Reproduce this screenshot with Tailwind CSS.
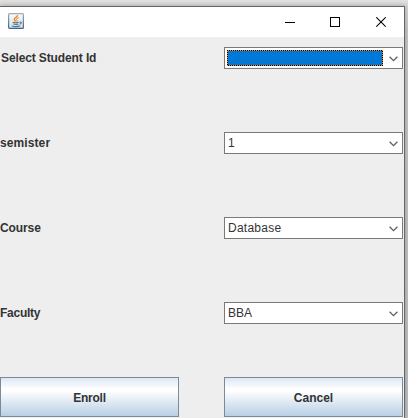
<!DOCTYPE html>
<html lang="en">
<head>
<meta charset="utf-8">
<title>Enroll</title>
<script src="https://cdn.jsdelivr.net/npm/@tailwindcss/browser@4"></script>
</head>
<body class="h-[418px] w-[408px] overflow-hidden bg-[linear-gradient(to_bottom,#e2e2e2,#d6d6d6_6px,#c8c8c8_30px,#c0c0c0)] pt-[6px] font-['Liberation_Sans',Arial,sans-serif] text-[12px] leading-[14px] text-[#333333]">
<div class="flex h-[412px] w-[405px] flex-col border-t border-r border-[#666666] bg-[#eeeeee] shadow-[0_0_5px_rgba(0,0,0,0.25)]">
  <header class="flex h-[30px] shrink-0 items-center bg-white pl-2">
    <svg class="-mt-[2px] size-4" viewBox="0 0 16 16" fill="none">
      <defs>
        <linearGradient id="tile" x1="0" y1="0" x2="0" y2="1"><stop stop-color="#fafafa"/><stop offset="1" stop-color="#d4dde4"/></linearGradient>
        <linearGradient id="edge" x1="0" y1="0" x2="0" y2="1"><stop stop-color="#9cadbb"/><stop offset="1" stop-color="#416684"/></linearGradient>
      </defs>
      <rect x=".6" y=".6" width="14.8" height="14.8" rx="1" fill="url(#tile)" stroke="url(#edge)" stroke-width="1.2"/>
      <path d="M9.4 2.2C9.8 4 6.2 4.7 6.3 6.4c.1 1 .9 1.4 1.4 2" stroke="#ef7d1a" stroke-width="1.3"/>
      <path d="M10.7 4.7C8.9 5.3 8 6.2 8.8 7c.6.6.2 1.1-.2 1.6" stroke="#ef7d1a" stroke-width="1"/>
      <path d="M4.7 9.3c1.4.5 4.4.5 6 0M5.3 11.1c1.4.5 3.7.5 5 0M3.8 13c2.5.7 6.5.6 8.3-.2M11.4 9.2c2-.8 3 .7.4 2.1" stroke="#4d7897" stroke-width="1.1"/>
    </svg>
    <div class="mr-[18px] ml-auto flex gap-[35px]">
      <svg class="h-[11px] w-[10px]" viewBox="0 0 10 11" shape-rendering="crispEdges"><path d="M0 5h10v1H0z"/></svg>
      <svg class="h-[11px] w-[10px]" viewBox="0 0 10 11" shape-rendering="crispEdges"><path d="M.5.5h9v9h-9z" fill="none" stroke="#000"/></svg>
      <svg class="ml-px h-[11px] w-[10px]" viewBox="0 0 10 11"><path d="M.3.3l9.4 9.4M9.7.3L.3 9.7" fill="none" stroke="#000" stroke-width="1.1"/></svg>
    </div>
  </header>
  <main class="grid grid-cols-[179px_179px] grid-rows-[85px_85px_85px_75px_40px] items-start gap-x-[45px] pt-[10px]">
    <label class="pt-[4px] pl-px font-bold tracking-[-0.12px]">Select Student Id</label>
    <div class="flex h-[22px] items-center border border-[#7a7a7a] bg-white pl-[2px]">
      <svg class="h-4 w-[156px]" viewBox="0 0 156 16">
        <path d="M0 0h156v16H0z" fill="#ff8728"/>
        <path d="M0 .5h156M.5 0v16M1 15.5h155M155.5 1v15" fill="none" stroke="#000" stroke-dasharray="1 1"/>
        <path d="M1 1h154v14H1z" fill="#0078d7"/>
      </svg>
      <svg class="mt-px mr-[4px] ml-auto h-[6px] w-[9px]" viewBox="0 0 9 6"><path d="M.6.7l3.9 3.9L8.4.7" fill="none" stroke="#606060" stroke-width="1.3"/></svg>
    </div>
    <label class="pt-[4px] font-bold tracking-[0.1px]">semister</label>
    <div class="flex h-[22px] items-center border border-[#7a7a7a] bg-white pl-[3px]">1<svg class="mt-px mr-[4px] ml-auto h-[6px] w-[9px]" viewBox="0 0 9 6"><path d="M.6.7l3.9 3.9L8.4.7" fill="none" stroke="#606060" stroke-width="1.3"/></svg></div>
    <label class="pt-[4px] font-bold tracking-[-0.1px]">Course</label>
    <div class="flex h-[22px] items-center border border-[#7a7a7a] bg-white pl-[3px] tracking-[0.25px]">Database<svg class="mt-px mr-[4px] ml-auto h-[6px] w-[9px]" viewBox="0 0 9 6"><path d="M.6.7l3.9 3.9L8.4.7" fill="none" stroke="#606060" stroke-width="1.3"/></svg></div>
    <label class="pt-[4px] font-bold tracking-[-0.25px]">Faculty</label>
    <div class="flex h-[22px] items-center border border-[#7a7a7a] bg-white pl-[3px]">BBA<svg class="mt-px mr-[4px] ml-auto h-[6px] w-[9px]" viewBox="0 0 9 6"><path d="M.6.7l3.9 3.9L8.4.7" fill="none" stroke="#606060" stroke-width="1.3"/></svg></div>
    <button class="h-10 border border-[#7a8a99] bg-[linear-gradient(to_bottom,#dde8f3,#ffffff_30%,#ffffff_33%,#b8cfe5)] pt-px font-bold tracking-[-0.25px]">Enroll</button>
    <button class="h-10 border border-[#7a8a99] bg-[linear-gradient(to_bottom,#dde8f3,#ffffff_30%,#ffffff_33%,#b8cfe5)] pt-px font-bold">Cancel</button>
  </main>
</div>
</body>
</html>
